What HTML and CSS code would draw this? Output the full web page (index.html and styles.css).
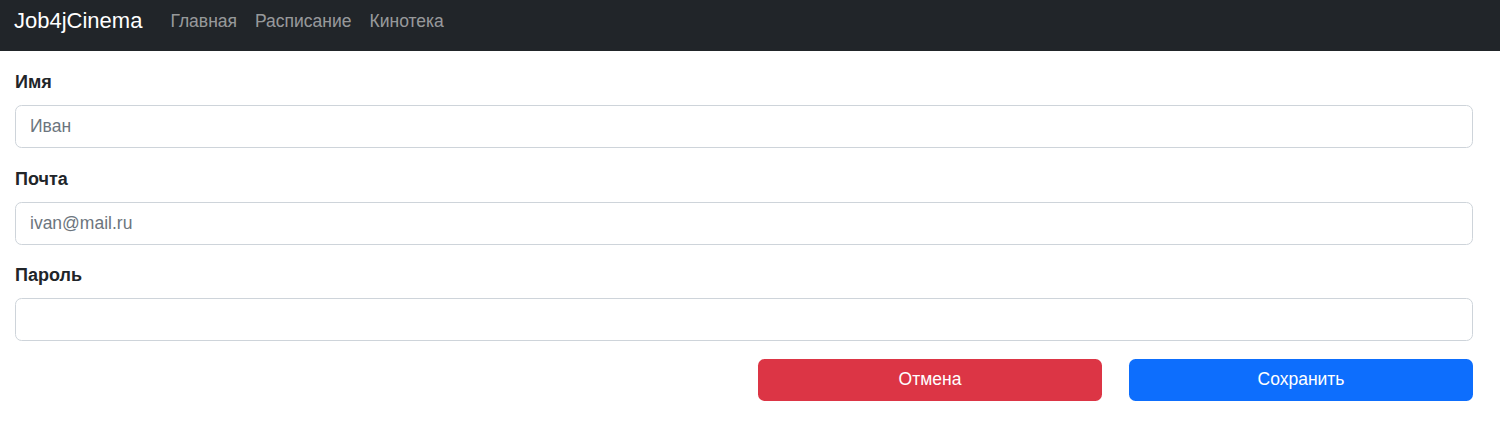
FILE: index.html
```html
<!DOCTYPE html>
<html lang="ru">
<head>
<meta charset="utf-8">
<title>Job4jCinema</title>
<link rel="stylesheet" href="styles.css">
</head>
<body>
<nav class="navbar">
  <a class="brand" href="#">Job4jCinema</a>
  <div class="nav-links">
    <a class="nav-link" href="#">Главная</a>
    <a class="nav-link" href="#">Расписание</a>
    <a class="nav-link" href="#">Кинотека</a>
  </div>
</nav>
<form class="form">
  <div class="group">
    <label class="label" for="name">Имя</label>
    <input class="control" id="name" type="text" placeholder="Иван">
  </div>
  <div class="group">
    <label class="label" for="email">Почта</label>
    <input class="control" id="email" type="text" placeholder="ivan@mail.ru">
  </div>
  <div class="group">
    <label class="label" for="password">Пароль</label>
    <input class="control" id="password" type="password">
  </div>
  <div class="actions">
    <button class="btn btn-danger" type="button">Отмена</button>
    <button class="btn btn-primary" type="submit">Сохранить</button>
  </div>
</form>
</body>
</html>
```

FILE: styles.css
```css
* { box-sizing: border-box; }
body {
  margin: 0;
  font-family: "Liberation Sans", Arial, sans-serif;
  color: #212529;
  background: #fff;
}
.navbar {
  height: 51px;
  background: #212529;
  display: flex;
  align-items: center;
  padding: 0 14px;
}
.brand {
  color: #fff;
  text-decoration: none;
  font-size: 22px;
  margin-right: 28px;
  margin-top: -9px;
}
.nav-links {
  display: flex;
  gap: 18px;
  margin-top: -9px;
}
.nav-link {
  color: rgba(255,255,255,.55);
  text-decoration: none;
  font-size: 17.5px;
}
.form {
  padding: 18px 27px 0 15px;
}
.group {
  margin-bottom: 17.5px;
}
.label {
  display: block;
  font-weight: bold;
  font-size: 18px;
  line-height: 27px;
  margin-bottom: 9px;
}
.control {
  display: block;
  width: 100%;
  height: 43px;
  padding: 0 14px;
  font-family: inherit;
  font-size: 17.5px;
  color: #212529;
  border: 1px solid #ced4da;
  border-radius: 6.5px;
  background: #fff;
}
.control::placeholder { color: #6c757d; opacity: 1; }
.actions {
  display: flex;
  justify-content: flex-end;
  gap: 27px;
}
.btn {
  width: 344px;
  height: 42px;
  border: 0;
  border-radius: 6.5px;
  color: #fff;
  font-family: inherit;
  font-size: 17.5px;
}
.btn-danger { background: #dc3545; }
.btn-primary { background: #0d6efd; }
```
